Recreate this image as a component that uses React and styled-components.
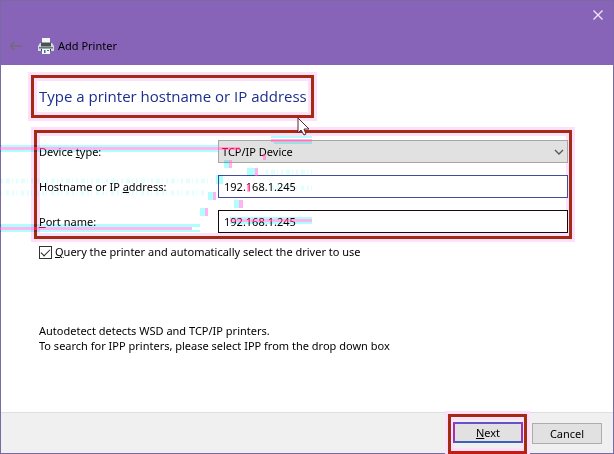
import React, { useState } from 'react';
import styled, { createGlobalStyle } from 'styled-components';

// x, y, width, height
const pinkMarks = [
  [0, 147, 240, 3],
  [0, 227, 192, 3],
  [230, 219, 82, 3],
  [271, 139, 41, 3],
  [229, 160, 3, 8],
  [263, 154, 3, 6],
  [255, 168, 3, 8],
  [247, 184, 3, 8],
  [213, 192, 3, 8],
  [239, 200, 4, 8],
  [205, 208, 3, 8],
];

const cyanMarks = [
  [0, 145, 218, 2],
  [0, 150, 218, 2],
  [0, 224, 200, 3],
  [0, 230, 200, 2],
  [230, 217, 82, 2],
  [230, 222, 82, 2],
  [271, 136, 41, 2],
  [274, 142, 38, 2],
  [224, 160, 5, 8],
  [247, 168, 8, 8],
  [216, 175, 7, 9],
  [208, 192, 5, 8],
  [234, 200, 5, 8],
  [200, 208, 5, 8],
];

const App = () => {
  const [device, setDevice] = useState('tcp');
  const [host, setHost] = useState('192.168.1.245');
  const [port, setPort] = useState('192.168.1.245');
  const [query, setQuery] = useState(true);

  return (
    <>
      <GlobalStyle />
      <Dialog>
        <Header>
          <CloseRow>
            <IconButton type="button" aria-label="Close">
              <svg width="10" height="10" viewBox="0 0 10 10">
                <path d="M.5.5l9 9M9.5.5l-9 9" stroke="#f4e8fa" strokeWidth="1.3" />
              </svg>
            </IconButton>
          </CloseRow>
          <TitleRow>
            <IconButton type="button" aria-label="Back" disabled>
              <svg width="14" height="10" viewBox="0 0 14 10" fill="none">
                <path d="M1.5 5H13M5 1L1.5 5 5 9" stroke="#75687f" strokeWidth="1.6" />
              </svg>
            </IconButton>
            <TitleGroup>
              <PrinterIcon />
              <Title>Add Printer</Title>
            </TitleGroup>
          </TitleRow>
        </Header>

        <Content>
          <HeadingFrame>
            <Heading>Type a printer hostname or IP address</Heading>
            <Cursor width="14" height="20" viewBox="0 0 14 20">
              <path d="M1 1v15l3-3 3 5 2-1-2-5h5z" fill="#fff" stroke="#5a2530" />
            </Cursor>
          </HeadingFrame>

          <FieldsFrame>
            <Label htmlFor="device">
              <span>Device <u>t</u>ype:</span>
            </Label>
            <SelectBox>
              <Select id="device" value={device} onChange={(e) => setDevice(e.target.value)}>
                <option value="tcp">TCP/IP Device</option>
              </Select>
              <Chevron width="10" height="6" viewBox="0 0 10 6" fill="none">
                <path d="M1 1l4 4 4-4" stroke="#555" strokeWidth="1.3" />
              </Chevron>
            </SelectBox>
            <Label htmlFor="host">
              <span>Hostname or IP <u>a</u>ddress:</span>
            </Label>
            <Input id="host" $color="#3f4f9c" value={host} onChange={(e) => setHost(e.target.value)} />
            <Label htmlFor="port">
              <span><u>P</u>ort name:</span>
            </Label>
            <Input id="port" $color="#160a12" value={port} onChange={(e) => setPort(e.target.value)} />
          </FieldsFrame>

          <CheckRow>
            <Checkbox type="checkbox" checked={query} onChange={(e) => setQuery(e.target.checked)} />
            <span><u>Q</u>uery the printer and automatically select the driver to use</span>
          </CheckRow>

          <Note>
            Autodetect detects WSD and TCP/IP printers.
            <br />
            To search for IPP printers, please select IPP from the drop down box
          </Note>
        </Content>

        <Footer>
          <ButtonFrame>
            <NextButton type="button"><span><u>N</u>ext</span></NextButton>
          </ButtonFrame>
          <Button type="button">Cancel</Button>
        </Footer>

        <Marks blend="screen" rects={pinkMarks} color="#e6003c" />
        <Marks blend="multiply" rects={pinkMarks} color="#ffb4f0" />
        <Marks blend="multiply" rects={cyanMarks} color="#b0ffff" />
        <Ghost width="320" height="210" viewBox="0 0 320 210" aria-hidden="true">
          <path d="M1 181H212M266 172H312" strokeDasharray="2 3 4 2 1 3" strokeWidth="5" />
          <path d="M1 193H205M266 188H312" strokeDasharray="1 4 3 3 2 2" strokeWidth="5" />
        </Ghost>
      </Dialog>
    </>
  );
};

const Marks = ({ rects, color, blend }) => (
  <MarksLayer width="320" height="240" viewBox="0 0 320 240" $blend={blend} aria-hidden="true">
    {rects.map(([x, y, w, h]) => (
      <rect key={`${x}-${y}`} x={x} y={y} width={w} height={h} fill={color} />
    ))}
  </MarksLayer>
);

const PrinterIcon = () => (
  <svg width="16" height="16" viewBox="0 0 16 16">
    <path d="M4 0h8v6H4z" fill="#f4f6f6" />
    <path d="M2 5h12l2 3v5H0V8z" fill="#d3d9dd" />
    <path d="M3 4.500h10V8.500H3z" fill="#4b5257" />
    <path d="M1 9h14v1.500H1z" fill="#6b757c" />
    <path d="M3 11h10v2H3z" fill="#39454e" />
    <path d="M4 11h8v5H4z" fill="#f2f7fa" />
    <path d="M6 12h1.500v3H6zM9 12h2v1H9z" fill="#3e6f9c" />
  </svg>
);

const GlobalStyle = createGlobalStyle`
  body {
    margin: 0;
    font-family: 'Noto Sans', 'Open Sans', sans-serif;
    font-size: 11px;
    color: #000;
  }

  * {
    box-sizing: border-box;
  }

  button, input, select {
    font: inherit;
    color: inherit;
  }
`;

const Dialog = styled.main`
  position: relative;
  display: flex;
  flex-direction: column;
  min-height: 100vh;
  border: 1px solid #7c68a6;
  background: #fff;
`;

const MarksLayer = styled.svg`
  position: absolute;
  top: -1px;
  left: -1px;
  pointer-events: none;
  mix-blend-mode: ${(p) => p.$blend};
`;

const Ghost = styled.svg`
  position: absolute;
  top: -1px;
  left: -1px;
  pointer-events: none;
  mix-blend-mode: multiply;
  stroke: #e2ffff;
`;

const Header = styled.header`
  background: #8764b8;
`;

const CloseRow = styled.div`
  display: flex;
  justify-content: flex-end;
  padding: 9px 10px 0;
`;

const TitleRow = styled.div`
  display: flex;
  align-items: center;
  gap: 15px;
  padding: 18px 8px 11px;
`;

const TitleGroup = styled.div`
  display: flex;
  align-items: center;
  gap: 4px;
`;

const IconButton = styled.button`
  display: flex;
  padding: 0;
  border: 0;
  background: none;
`;

const Title = styled.span`
  font-size: 11px;
  line-height: 16px;
`;

const Content = styled.section`
  flex: 1;
  padding: 10px 41px 0 30px;
`;

const Frame = styled.div`
  border: 3px solid #a32b14;
  outline: 3px solid #ffe0fa;
  box-shadow: inset 0 0 0 3px #ffe0fa;
`;

const HeadingFrame = styled(Frame)`
  position: relative;
  width: fit-content;
  padding: 7px 4px 8px 5px;
`;

const Heading = styled.h1`
  margin: 0;
  font-family: 'Open Sans', 'Noto Sans', sans-serif;
  font-size: 15px;
  line-height: 22px;
  font-weight: 400;
  color: #1c2f8c;
`;

const Cursor = styled.svg`
  position: absolute;
  right: 0;
  bottom: -22px;
  z-index: 2;
`;

const FieldsFrame = styled(Frame)`
  display: grid;
  grid-template-columns: 179px 1fr;
  grid-auto-rows: 23px;
  row-gap: 12px;
  margin: 12px 0 0 3px;
  padding: 7px 1px 3px 2px;
`;

const Label = styled.label`
  display: flex;
  align-items: center;
`;

const SelectBox = styled.div`
  position: relative;
  display: flex;
`;

const Select = styled.select`
  flex: 1;
  appearance: none;
  padding: 0 3px;
  border: 1px solid #a6a6a6;
  border-radius: 0;
  background: #e1e1e1;
`;

const Chevron = styled.svg`
  position: absolute;
  right: 4px;
  top: 9px;
  pointer-events: none;
`;

const Input = styled.input`
  min-width: 0;
  padding: 0 5px;
  border: 1px solid ${(p) => p.$color};
  background: #fff;
`;

const CheckRow = styled.label`
  display: flex;
  align-items: center;
  gap: 3px;
  margin: 5px 0 0 8px;
  line-height: 16px;
`;

const Checkbox = styled.input`
  appearance: none;
  width: 13px;
  height: 13px;
  margin: 0;
  border: 1px solid #333;
  background: #fff;

  &:checked::after {
    content: '';
    display: block;
    width: 8px;
    height: 4px;
    margin: 2px 1px;
    border-left: 1px solid #222;
    border-bottom: 1px solid #222;
    transform: rotate(-45deg);
  }
`;

const Note = styled.p`
  margin: 63px 0 12px 8px;
  line-height: 15px;
`;

const Footer = styled.footer`
  display: flex;
  justify-content: flex-end;
  align-items: center;
  gap: 5px;
  margin-bottom: -1px;
  padding: 1px 11px 0;
  border-top: 1px solid #dfdfdf;
  border-bottom: 1px solid #7c68a6;
  background: #f0f0f0;
`;

const ButtonFrame = styled(Frame)`
  margin-bottom: -1px;
  padding: 5px 1px 8px 2px;
  border-bottom-color: #c41c12;
`;

const Button = styled.button`
  display: block;
  width: 70px;
  height: 21px;
  padding: 0;
  border: 1px solid #adadad;
  background: #e1e1e1;
`;

const NextButton = styled(Button)`
  border: 2px solid;
  border-color: #6a50c8 #a030b0 #4060b8;
`;

export default App;
